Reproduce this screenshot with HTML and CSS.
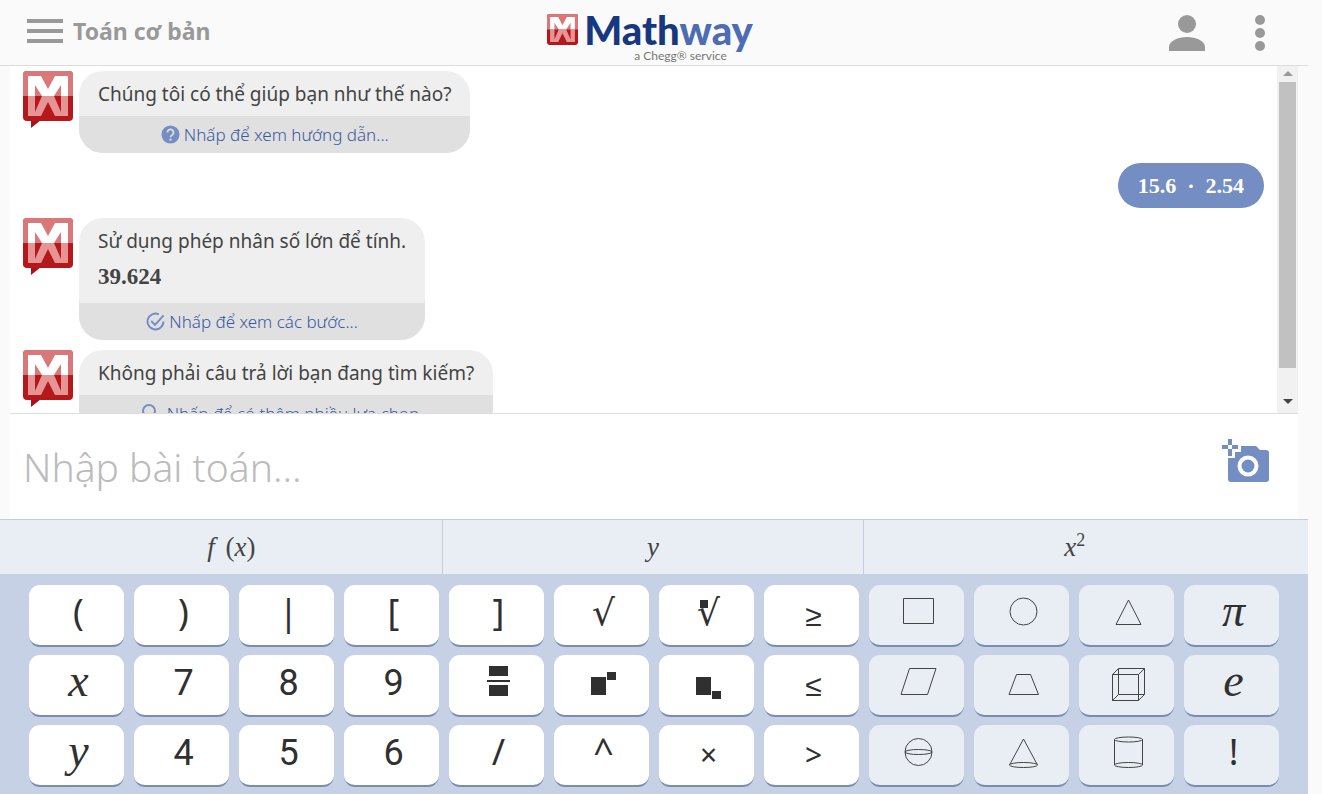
FILE: index.html
```html
<!DOCTYPE html>
<html lang="vi">
<head>
    <meta charset="UTF-8">
    <meta name="viewport" content="width=device-width, initial-scale=1.0">
    <title>Mathway | Toán cơ bản</title>
    <link rel="stylesheet" href="styles.css">
</head>
<body>
    <svg class="defs" aria-hidden="true">
        <symbol id="mark" viewBox="0 0 50 50">
            <rect width="50" height="50" rx="4" fill="#b5181b"/>
            <path d="M0 25V4a4 4 0 0 1 4-4h42a4 4 0 0 1 4 4v21z" fill="#d97779"/>
            <path d="M5 25V5h13l7 13 7-13h13v20h-7V14l-7 11H19l-7-11v11z" fill="#fff"/>
            <path d="M5 25h7v16l7-16h12l7 16V25h7v20H32l-7-14-7 14H5z" fill="#e79495"/>
        </symbol>
        <symbol id="avatar" viewBox="0 0 50 58">
            <path d="M8 48v9l10-8z" fill="#a31517"/>
            <use href="#mark" width="50" height="50"/>
        </symbol>
    </svg>

    <div class="app">
        <header class="topbar">
            <button class="menu">
                <svg width="36" height="24" viewBox="0 0 36 24" fill="#999"><path d="M0 0h36v4H0zM0 10h36v4H0zM0 20h36v4H0z"/></svg>
                <span>Toán cơ bản</span>
            </button>
            <a class="logo" href="#" aria-label="Mathway">
                <svg width="31" height="31"><use href="#mark" width="31" height="31"/></svg>
                <span class="logo-text">
                    <span class="logo-name">Math<b>way</b></span>
                    <span class="logo-sub">a Chegg® service</span>
                </span>
            </a>
            <div class="actions">
                <button aria-label="Tài khoản">
                    <svg width="36" height="36" viewBox="0 0 36 36" fill="#999"><circle cx="18" cy="9" r="9"/><path d="M0 36v-4c0-6 9-10 18-10s18 4 18 10v4z"/></svg>
                </button>
                <button aria-label="Thêm">
                    <svg width="10" height="36" viewBox="0 0 10 36" fill="#999"><circle cx="5" cy="5" r="5"/><circle cx="5" cy="18" r="5"/><circle cx="5" cy="31" r="5"/></svg>
                </button>
            </div>
        </header>

        <main class="chat">
            <div class="messages">
                <div class="row">
                    <svg width="50" height="58"><use href="#avatar"/></svg>
                    <div class="bubble">
                        <p>Chúng tôi có thể giúp bạn như thế nào?</p>
                        <a href="#">
                            <svg width="19" height="19" viewBox="0 0 20 20"><circle cx="10" cy="10" r="9.5" fill="#748dc2"/><path d="M6.8 7.8a3.2 3.2 0 1 1 5 2.6c-1.2.8-1.8 1.3-1.8 2.6" fill="none" stroke="#e0e0e0" stroke-width="1.8"/><circle cx="10" cy="15.5" r="1.2" fill="#e0e0e0"/></svg>
                            Nhấp để xem hướng dẫn...
                        </a>
                    </div>
                </div>
                <div class="row user">
                    <div class="bubble math">15.6 &nbsp;·&nbsp; 2.54</div>
                </div>
                <div class="row">
                    <svg width="50" height="58"><use href="#avatar"/></svg>
                    <div class="bubble">
                        <p>Sử dụng phép nhân số lớn để tính.</p>
                        <p class="math answer">39.624</p>
                        <a href="#">
                            <svg width="19" height="19" viewBox="0 0 20 20" fill="none" stroke="#748dc2" stroke-width="2"><path d="M13.5 2.4A8.4 8.4 0 1 0 18.4 10"/><path d="M5.5 9.5l4 4 9-10"/></svg>
                            Nhấp để xem các bước...
                        </a>
                    </div>
                </div>
                <div class="row">
                    <svg width="50" height="58"><use href="#avatar"/></svg>
                    <div class="bubble">
                        <p>Không phải câu trả lời bạn đang tìm kiếm?</p>
                        <a href="#">
                            <svg width="22" height="19" viewBox="0 0 22 19" fill="none" stroke="#748dc2" stroke-width="2"><path d="M5 14c0-3-3-4-3-7a6 6 0 0 1 12 0c0 3-3 4-3 7zM5 17h6"/></svg>
                            Nhấp để có thêm nhiều lựa chọn...
                        </a>
                    </div>
                </div>
            </div>
            <div class="scrollbar" aria-hidden="true">
                <svg width="10" height="5" viewBox="0 0 10 5"><path d="M0 5l5-5 5 5z" fill="#999"/></svg>
                <div class="thumb"></div>
                <svg width="10" height="5" viewBox="0 0 10 5"><path d="M0 0h10L5 5z" fill="#444"/></svg>
            </div>
        </main>

        <form class="entry">
            <input type="text" placeholder="Nhập bài toán..." aria-label="Nhập bài toán">
            <button type="button" aria-label="Chụp ảnh">
                <svg width="48" height="44" viewBox="0 0 48 44">
                    <path d="M19 7h15l4 4h6a3 3 0 0 1 3 3v26a3 3 0 0 1-3 3H9a3 3 0 0 1-3-3V19h7v-6h6z" fill="#748dc2"/>
                    <circle cx="26" cy="27" r="8.5" fill="none" stroke="#fff" stroke-width="4"/>
                    <path d="M5 0h6v18H5zM-1 5h19v7H-1z" fill="#fff"/>
                    <path d="M6 0h4v17H6zM0 6h16v4H0z" fill="#748dc2"/>
                    <path d="M6 6h4v4H6z" fill="#fff"/>
                </svg>
            </button>
        </form>

        <nav class="tabs">
            <button><i>f</i>&thinsp;&thinsp;(<i>x</i>)</button>
            <button><i>y</i></button>
            <button><i>x</i><sup>2</sup></button>
        </nav>

        <div class="keyboard">
            <button class="key sign">(</button>
            <button class="key sign">)</button>
            <button class="key sign">|</button>
            <button class="key sign">[</button>
            <button class="key sign">]</button>
            <button class="key symbol">√</button>
            <button class="key symbol root">√</button>
            <button class="key small">≥</button>
            <button class="key alt" aria-label="Hình chữ nhật"><svg viewBox="4 0 91 60"><path d="M34.5 13.5h30v25h-30z"/></svg></button>
            <button class="key alt" aria-label="Hình tròn"><svg viewBox="4 0 91 60"><circle cx="49.5" cy="26.5" r="13.5"/></svg></button>
            <button class="key alt" aria-label="Tam giác"><svg viewBox="4 0 91 60"><path d="M49.5 15L62 39.5H37z"/></svg></button>
            <button class="key alt var">π</button>

            <button class="key var">x</button>
            <button class="key">7</button>
            <button class="key">8</button>
            <button class="key">9</button>
            <button class="key solid" aria-label="Phân số"><svg viewBox="4 0 91 60"><path d="M40 11h19v10H40zM38 25h23v2H38zM40 30h19v11H40z"/></svg></button>
            <button class="key solid" aria-label="Số mũ"><svg viewBox="4 0 91 60"><path d="M37 22h15v18H37zM53 17h9v8h-9z"/></svg></button>
            <button class="key solid" aria-label="Chỉ số dưới"><svg viewBox="4 0 91 60"><path d="M37 22h15v18H37zM53 36h9v8h-9z"/></svg></button>
            <button class="key small">≤</button>
            <button class="key alt" aria-label="Hình bình hành"><svg viewBox="4 0 91 60"><path d="M40.5 13.5H67l-8.5 26H32z"/></svg></button>
            <button class="key alt" aria-label="Hình thang"><svg viewBox="4 0 91 60"><path d="M42.5 19.5h14l8 20H35z"/></svg></button>
            <button class="key alt" aria-label="Hình hộp"><svg viewBox="4 0 91 60"><path d="M39.5 13.5h26v26h-26zM33.5 19.5h26v26h-26zM33.5 19.5l6-6M59.5 19.5l6-6M33.5 45.5l6-6M59.5 45.5l6-6"/></svg></button>
            <button class="key alt var">e</button>

            <button class="key var">y</button>
            <button class="key">4</button>
            <button class="key">5</button>
            <button class="key">6</button>
            <button class="key sign">/</button>
            <button class="key sign">^</button>
            <button class="key small">×</button>
            <button class="key small">&gt;</button>
            <button class="key alt" aria-label="Hình cầu"><svg viewBox="4 0 91 60"><circle cx="49.5" cy="27" r="13.5"/><ellipse cx="49.5" cy="27" rx="13.5" ry="2.5"/></svg></button>
            <button class="key alt" aria-label="Hình nón"><svg viewBox="4 0 91 60"><path d="M35.5 40l14-26 14 26"/><ellipse cx="49.5" cy="40" rx="14" ry="2.5"/></svg></button>
            <button class="key alt" aria-label="Hình trụ"><svg viewBox="4 0 91 60"><path d="M35.5 14.5V40M63.5 14.5V40"/><ellipse cx="49.5" cy="14.5" rx="14" ry="2.5"/><ellipse cx="49.5" cy="40" rx="14" ry="2.5"/></svg></button>
            <button class="key alt sign">!</button>
        </div>
    </div>
</body>
</html>
```
FILE: styles.css
```css
* {
    box-sizing: border-box;
}

body {
    margin: 0;
    background: #fafafa;
    color: #444;
    font-family: "Noto Sans", "Open Sans", sans-serif;
    font-size: 19px;
}

button {
    padding: 0;
    border: none;
    background: none;
    color: inherit;
    font: inherit;
    cursor: pointer;
}

a {
    text-decoration: none;
}

svg {
    display: block;
}

.defs {
    position: absolute;
    width: 0;
    height: 0;
}

.app {
    display: flex;
    flex-direction: column;
    height: 100vh;
    margin-right: 14px;
}

/* Header */
.topbar {
    display: grid;
    grid-template-columns: 1fr auto 1fr;
    align-items: center;
    height: 66px;
    padding: 0 43px 0 27px;
    border-bottom: 1px solid #ddd;
}

.menu {
    display: flex;
    align-items: center;
    gap: 10px;
    padding-bottom: 4px;
    color: #999;
    font-size: 23px;
    font-weight: 700;
}

.logo {
    display: flex;
    align-items: flex-start;
    gap: 6px;
    padding: 10px 0 0 8px;
    font-family: Lato, sans-serif;
}

.logo-text {
    display: flex;
    flex-direction: column;
    align-items: center;
}

.logo-name {
    padding-bottom: 4px;
    color: #17377f;
    font-size: 40px;
    font-weight: 900;
    line-height: 32px;
}

.logo-name b {
    color: #4c6cb3;
    font-weight: 900;
}

.logo-sub {
    padding-left: 24px;
    color: #777;
    font-size: 12px;
    line-height: 12px;
}

.actions {
    display: flex;
    justify-content: flex-end;
    gap: 50px;
}

/* Chat */
.chat {
    display: flex;
    flex: 1;
    min-height: 0;
    margin: 0 10px;
    border-bottom: 1px solid #ddd;
    background: #fff;
}

.messages {
    display: flex;
    flex: 1;
    flex-direction: column;
    gap: 10px;
    padding: 5px 13px;
    overflow: hidden;
}

.row {
    display: flex;
    flex-shrink: 0;
    align-items: flex-start;
    gap: 6px;
}

.row.user {
    justify-content: flex-end;
}

.bubble {
    overflow: hidden;
    border-radius: 24px;
    background: #efefef;
    line-height: 45px;
}

.bubble p {
    margin: 0;
    padding: 2px 19px 0;
    line-height: 43px;
}

.bubble a {
    display: flex;
    align-items: center;
    justify-content: center;
    gap: 4px;
    height: 37px;
    background: #e0e0e0;
    color: #3a59a0;
    font-size: 17px;
    font-weight: 300;
}

.math {
    font-family: "Liberation Serif", serif;
    font-size: 23px;
    font-weight: 700;
}

.bubble .answer {
    padding-bottom: 14px;
    line-height: 24px;
}

.user .bubble {
    padding: 0 20px;
    background: #748dc2;
    color: #fff;
    font-size: 22px;
}

.scrollbar {
    display: flex;
    flex-direction: column;
    align-items: center;
    gap: 6px;
    width: 21px;
    padding: 5px 0 9px;
    background: #f1f1f1;
}

.thumb {
    width: 17px;
    height: 286px;
    margin-bottom: auto;
    background: #c1c1c1;
}

/* Input */
.entry {
    display: flex;
    align-items: center;
    height: 105px;
    margin: 0 10px;
    padding: 0 28px 0 13px;
    background: #fff;
}

.entry input {
    flex: 1;
    min-width: 0;
    height: 64px;
    padding: 0;
    border: none;
    outline: none;
    background: none;
    font-family: inherit;
    font-size: 39px;
    font-weight: 300;
}

.entry input::placeholder {
    color: #bbb;
}

.entry button {
    padding-bottom: 12px;
}

/* Tabs */
.tabs {
    display: flex;
    height: 55px;
    padding: 0 23px 0 21px;
    border-top: 1px solid #c3cddc;
    background: #e9eef5;
}

.tabs button {
    flex: 1;
    font-family: "Liberation Serif", serif;
    font-size: 27px;
}

.tabs button + button {
    border-left: 1px solid #c3cddc;
}

.tabs sup {
    font-size: 18px;
    line-height: 0;
}

/* Keyboard */
.keyboard {
    display: grid;
    grid-template-columns: repeat(12, 1fr);
    gap: 8px 10px;
    padding: 11px 29px 7px;
    background: #c6d1e6;
}

.key {
    display: flex;
    justify-content: center;
    height: 62px;
    padding-left: 4px;
    border-bottom: 2px solid #788cb6;
    border-radius: 11px;
    background: #fff;
    color: #303030;
    font-family: Roboto, "Noto Sans", sans-serif;
    font-size: 36px;
    line-height: 56px;
}

.alt {
    background: #e9eef5;
}

.small {
    font-family: "Noto Sans", sans-serif;
    font-size: 30px;
    line-height: 60px;
}

.sign {
    font-family: "Noto Sans", sans-serif;
    line-height: 54px;
}

.symbol {
    font-family: "DejaVu Sans", sans-serif;
}

.var {
    font-family: "Liberation Serif", serif;
    font-size: 46px;
    font-style: italic;
    line-height: 52px;
}

.root {
    position: relative;
}

.root::before {
    position: absolute;
    top: 15px;
    left: 41px;
    width: 8px;
    height: 8px;
    background: #303030;
    content: "";
}

.key svg {
    width: 91px;
    height: 60px;
    fill: none;
    stroke: #444;
}

.solid svg {
    fill: #303030;
    stroke: none;
}
```
